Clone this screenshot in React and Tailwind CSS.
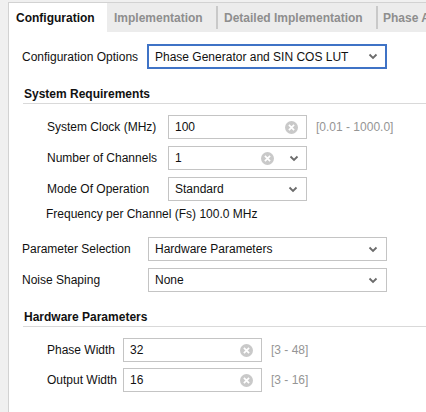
import React from "react";

/* small icons */
function Chevron() {
  return (
    <svg width="10" height="7" viewBox="0 0 10 7" className="shrink-0">
      <polyline points="1.5,1.5 5,5 8.5,1.5" fill="none" stroke="#6b6b6b" strokeWidth="1.8" />
    </svg>
  );
}

function ClearIcon() {
  return (
    <svg width="13" height="13" viewBox="0 0 12 12" className="shrink-0">
      <circle cx="6" cy="6" r="6" fill="#c9c9c9" />
      <path d="M3.6 3.6 L8.4 8.4 M8.4 3.6 L3.6 8.4" stroke="#ffffff" strokeWidth="1.6" />
    </svg>
  );
}

function SectionHeader({ children, className = "" }) {
  return (
    <div className={`ml-[14px] border-b border-[#d9d9d9] pb-[2px] ${className}`}>
      <div className="pl-[1px] text-[12px] leading-[14px] font-bold text-[#111]">{children}</div>
    </div>
  );
}

function TextField({ value, width, range, clear = true, select = false }) {
  return (
    <div className="flex items-center">
      <div
        className={`flex items-center h-[24px] border border-[#c4c4c4] bg-white pl-[6px] pr-[7px] ${width}`}
      >
        <span className="flex-1 text-[12px] text-[#111]">{value}</span>
        {clear && (
          <span className={select ? "mr-[15px]" : "pr-[1px]"}>
            <ClearIcon />
          </span>
        )}
        {select && <Chevron />}
      </div>
      {range && <span className="ml-[9px] text-[12px] text-[#959595]">{range}</span>}
    </div>
  );
}

function SelectField({ value, width }) {
  return (
    <div className={`flex items-center h-[24px] border border-[#c4c4c4] bg-white pl-[6px] pr-[8px] ${width}`}>
      <span className="flex-1 text-[12px] text-[#111]">{value}</span>
      <Chevron />
    </div>
  );
}

export default function App() {
  const font = { fontFamily: '"Liberation Sans", Arial, sans-serif' };
  return (
    <div
      className="w-[426px] h-[412px] bg-[#f0f0f0] pt-[2px] pl-[8px] overflow-hidden text-[#111]"
      style={font}
    >
      <div className="h-full border-t border-l border-[#d2d2d2] bg-white">
        {/* tabs */}
        <div className="flex h-[29px] items-stretch text-[12px] font-bold whitespace-nowrap overflow-hidden">
          <div className="w-[98px] shrink-0 flex items-center pl-[7px] bg-white text-[#111]">Configuration</div>
          <div className="flex-1 min-w-0 flex items-center bg-[#ececec] text-[#8e8e8e] overflow-hidden">
            <div className="w-[109px] shrink-0 pl-[7px]">Implementation</div>
            <div className="w-[2px] h-[23px] shrink-0 bg-[#c9c9c9]" />
            <div className="w-[158px] shrink-0 pl-[6px]">Detailed Implementation</div>
            <div className="w-[2px] h-[23px] shrink-0 bg-[#c9c9c9]" />
            <div className="shrink-0 pl-[5px]">Phase A</div>
          </div>
        </div>

        {/* configuration options */}
        <div className="flex items-center mt-[12px] pl-[13px]">
          <div className="w-[125px] text-[12px]">Configuration Options</div>
          <div className="flex items-center w-[240px] h-[25px] border-2 border-[#3f73c6] pl-[6px] pr-[7px]">
            <span className="flex-1 text-[12px]">Phase Generator and SIN COS LUT</span>
            <Chevron />
          </div>
        </div>

        <SectionHeader className="mt-[18px]">System Requirements</SectionHeader>

        <div className="pl-[38px] mt-[11px] flex flex-col gap-[7px]">
          <div className="flex items-center">
            <div className="w-[121px] text-[12px]">System Clock (MHz)</div>
            <TextField value="100" width="w-[139px]" range="[0.01 - 1000.0]" />
          </div>
          <div className="flex items-center">
            <div className="w-[121px] text-[12px]">Number of Channels</div>
            <TextField value="1" width="w-[139px]" select />
          </div>
          <div className="flex items-center">
            <div className="w-[121px] text-[12px]">Mode Of Operation</div>
            <SelectField value="Standard" width="w-[139px]" />
          </div>
        </div>
        <div className="pl-[37px] mt-[6px] text-[12px] leading-[14px]">
          Frequency per Channel (Fs) 100.0 MHz
        </div>

        {/* parameter selection */}
        <div className="pl-[13px] mt-[16px] flex flex-col gap-[7px]">
          <div className="flex items-center">
            <div className="w-[126px] text-[12px]">Parameter Selection</div>
            <SelectField value="Hardware Parameters" width="w-[239px]" />
          </div>
          <div className="flex items-center">
            <div className="w-[126px] text-[12px]">Noise Shaping</div>
            <SelectField value="None" width="w-[239px]" />
          </div>
        </div>

        <SectionHeader className="mt-[18px]">Hardware Parameters</SectionHeader>

        <div className="pl-[38px] mt-[11px] flex flex-col gap-[6px]">
          <div className="flex items-center">
            <div className="w-[76px] text-[12px]">Phase Width</div>
            <TextField value="32" width="w-[139px]" range="[3 - 48]" />
          </div>
          <div className="flex items-center">
            <div className="w-[76px] text-[12px]">Output Width</div>
            <TextField value="16" width="w-[139px]" range="[3 - 16]" />
          </div>
        </div>
      </div>
    </div>
  );
}
